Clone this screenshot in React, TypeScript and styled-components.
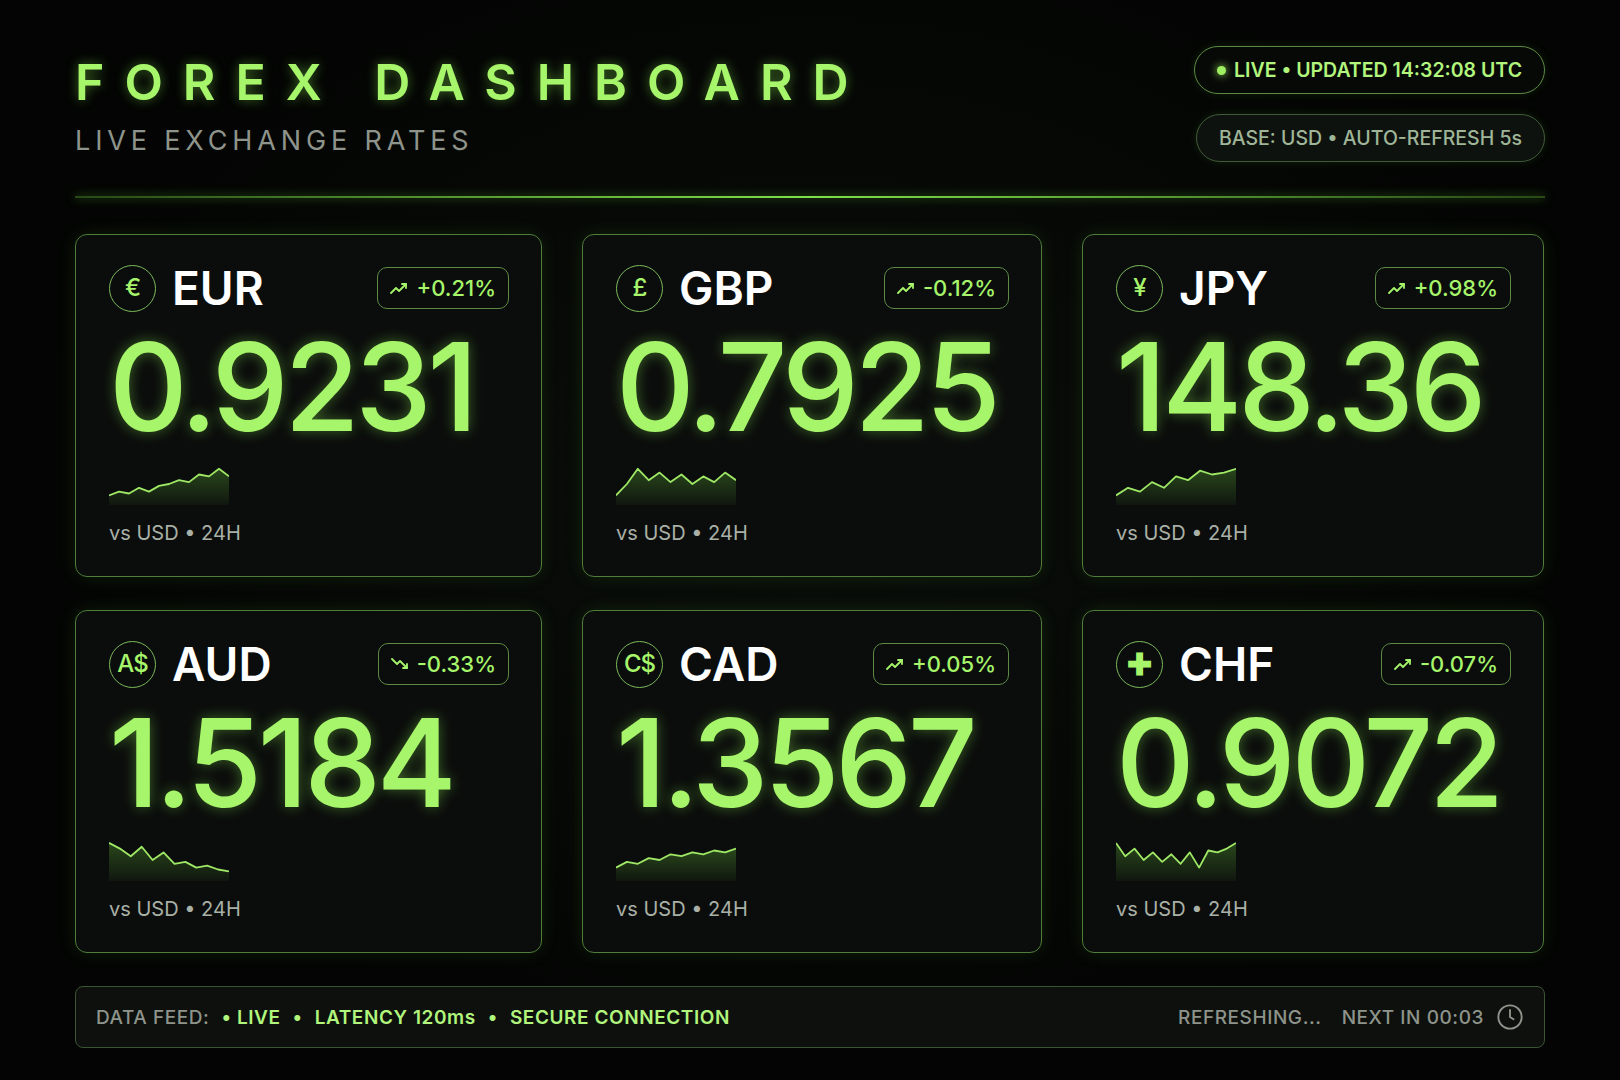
import React from 'react';
import styled, { createGlobalStyle } from 'styled-components';

const GlobalStyle = createGlobalStyle`
  html, body { margin: 0; padding: 0; background: #030403; }
  body { font-family: Inter, "Noto Sans", sans-serif; color: #a6f56a; }
`;

const Page = styled.div`
  width: 1620px;
  height: 1080px;
  box-sizing: border-box;
  padding: 46px 75px 0;
  background: radial-gradient(ellipse at 50% 45%, #0a0e0a 0%, #030403 70%);
  display: flex;
  flex-direction: column;
`;

const Header = styled.header`
  display: flex;
  justify-content: space-between;
  align-items: flex-start;
  height: 150px;
`;

const Title = styled.h1`
  margin: 6px 0 0;
  font-size: 50px;
  line-height: 60px;
  font-weight: 600;
  letter-spacing: 0.4em;
  color: #a6f56a;
  text-shadow: 0 0 12px rgba(140, 240, 80, 0.45);
`;

const Subtitle = styled.div`
  margin-top: 12px;
  font-size: 27px;
  letter-spacing: 0.18em;
  color: #8e948b;
`;

const Pills = styled.div`
  display: flex;
  flex-direction: column;
  align-items: flex-end;
  gap: 20px;
`;

const Pill = styled.div<{ $muted?: boolean }>`
  height: 48px;
  box-sizing: border-box;
  padding: 0 22px;
  border-radius: 24px;
  display: flex;
  align-items: center;
  gap: 8px;
  font-size: 19.5px;
  font-weight: ${(p) => (p.$muted ? 500 : 600)};
  color: ${(p) => (p.$muted ? '#9fb598' : '#b2f57c')};
  border: 1.5px solid ${(p) => (p.$muted ? '#3f5b38' : '#5c8a44')};
  background: ${(p) => (p.$muted ? '#0e120e' : '#070907')};
  box-shadow: 0 0 10px rgba(120, 220, 70, 0.12);
`;

const Dot = styled.span`
  width: 9px;
  height: 9px;
  border-radius: 50%;
  background: #9ef060;
  box-shadow: 0 0 8px #9ef060;
`;

const Divider = styled.div`
  height: 2px;
  background: linear-gradient(90deg, rgba(110, 200, 60, 0.35), #7ee04a 50%, rgba(110, 200, 60, 0.35));
  box-shadow: 0 0 10px rgba(120, 230, 60, 0.6);
`;

const Grid = styled.div`
  margin-top: 36px;
  display: grid;
  grid-template-columns: 467px 460px 462px;
  column-gap: 40px;
  row-gap: 33px;
`;

const Card = styled.div`
  height: 343px;
  box-sizing: border-box;
  padding: 28px 32px 0 33px;
  border: 1.5px solid #4f7d3a;
  border-radius: 12px;
  background: #0b0d0c;
  box-shadow: 0 0 18px rgba(110, 220, 60, 0.12);
  display: flex;
  flex-direction: column;
`;

const CardTop = styled.div`
  display: flex;
  align-items: center;
  justify-content: space-between;
  height: 50px;
`;

const Currency = styled.div`
  display: flex;
  align-items: center;
  gap: 16px;
  font-size: 46px;
  line-height: 50px;
  font-weight: 600;
  color: #fff;
`;

const Symbol = styled.div`
  width: 45px;
  height: 45px;
  border-radius: 50%;
  border: 1.5px solid #7ab85a;
  display: flex;
  align-items: center;
  justify-content: center;
  font-size: 24px;
  font-weight: 500;
  color: #a6f56a;
  letter-spacing: -0.04em;
`;

const Change = styled.div`
  height: 42px;
  box-sizing: border-box;
  padding: 0 12px;
  border-radius: 10px;
  border: 1.5px solid #5c8a44;
  display: flex;
  align-items: center;
  gap: 6px;
  font-size: 22px;
  font-weight: 500;
  color: #a6f56a;
`;

const Rate = styled.div`
  margin-top: 16px;
  font-size: 122px;
  line-height: 116px;
  font-weight: 500;
  letter-spacing: -0.035em;
  color: #a6f56a;
  text-shadow: 0 0 14px rgba(140, 240, 80, 0.4);
`;

const Spark = styled.svg`
  margin-top: 16px;
  display: block;
`;

const Caption = styled.div`
  margin-top: 16px;
  font-size: 20px;
  color: #a9b0a6;
`;

const Footer = styled.footer`
  margin-top: 33px;
  height: 62px;
  box-sizing: border-box;
  padding: 0 20px;
  border: 1.5px solid #3b5432;
  border-radius: 8px;
  background: #0d100d;
  display: flex;
  align-items: center;
  justify-content: space-between;
  font-size: 19px;
  letter-spacing: 0.03em;
`;

const FootGroup = styled.div`
  display: flex;
  align-items: center;
  gap: 12px;
`;

const FootText = styled.span<{ $bright?: boolean }>`
  color: ${(p) => (p.$bright ? '#b2f57c' : '#8e948b')};
  font-weight: ${(p) => (p.$bright ? 600 : 500)};
`;

const TrendUp = () => (
  <svg width="20" height="14" viewBox="0 0 20 14" fill="none" stroke="#a6f56a" strokeWidth="1.8" strokeLinecap="round" strokeLinejoin="round">
    <path d="M1 12l5-5 3 3 7-7" />
    <path d="M12 3h4v4" />
  </svg>
);

const TrendDown = () => (
  <svg width="20" height="14" viewBox="0 0 20 14" fill="none" stroke="#a6f56a" strokeWidth="1.8" strokeLinecap="round" strokeLinejoin="round">
    <path d="M1 2l5 5 3-3 7 7" />
    <path d="M12 11h4v-4" />
  </svg>
);

const Clock = () => (
  <svg width="28" height="28" viewBox="0 0 24 24" fill="none" stroke="#8e948b" strokeWidth="1.6" strokeLinecap="round">
    <circle cx="12" cy="12" r="10" />
    <path d="M12 6v6l3 2" />
  </svg>
);

function Sparkline({ points, id }: { points: number[]; id: string }) {
  const w = 120;
  const h = 44;
  const step = w / (points.length - 1);
  const line = points.map((v, i) => `${(i * step).toFixed(1)},${(h - v * (h - 6) - 2).toFixed(1)}`).join(' ');
  return (
    <Spark width={w} height={h} viewBox={`0 0 ${w} ${h}`}>
      <defs>
        <linearGradient id={id} x1="0" y1="0" x2="0" y2="1">
          <stop offset="0" stopColor="#6fcf3f" stopOpacity="0.3" />
          <stop offset="1" stopColor="#6fcf3f" stopOpacity="0.05" />
        </linearGradient>
      </defs>
      <polygon points={`0,${h} ${line} ${w},${h}`} fill={`url(#${id})`} />
      <polyline points={line} fill="none" stroke="#9ee865" strokeWidth="1.8" strokeLinejoin="round" />
    </Spark>
  );
}

type Pair = { code: string; sym: React.ReactNode; change: string; up: boolean; rate: string; spark: number[] };

const pairs: Pair[] = [
  { code: 'EUR', sym: '€', change: '+0.21%', up: true, rate: '0.9231', spark: [0.2, 0.3, 0.25, 0.4, 0.3, 0.45, 0.5, 0.6, 0.55, 0.75, 0.7, 0.9, 0.7] },
  { code: 'GBP', sym: '£', change: '-0.12%', up: true, rate: '0.7925', spark: [0.2, 0.5, 0.9, 0.6, 0.8, 0.55, 0.75, 0.5, 0.7, 0.55, 0.8, 0.6] },
  { code: 'JPY', sym: '¥', change: '+0.98%', up: true, rate: '148.36', spark: [0.2, 0.4, 0.3, 0.55, 0.4, 0.7, 0.6, 0.85, 0.75, 0.8, 0.9] },
  { code: 'AUD', sym: 'A$', change: '-0.33%', up: false, rate: '1.5184', spark: [0.95, 0.8, 0.6, 0.85, 0.5, 0.7, 0.4, 0.45, 0.3, 0.35, 0.25, 0.2] },
  { code: 'CAD', sym: 'C$', change: '+0.05%', up: true, rate: '1.3567', spark: [0.3, 0.45, 0.4, 0.55, 0.5, 0.65, 0.6, 0.7, 0.65, 0.75, 0.7, 0.8] },
  { code: 'CHF', sym: <b style={{ fontSize: 30, lineHeight: 1 }}>✚</b>, change: '-0.07%', up: true, rate: '0.9072', spark: [0.95, 0.6, 0.8, 0.5, 0.7, 0.45, 0.65, 0.4, 0.7, 0.3, 0.75, 0.7, 0.8, 0.95] },
];

export default function App() {
  return (
    <>
      <GlobalStyle />
      <Page>
        <Header>
          <div>
            <Title>FOREX DASHBOARD</Title>
            <Subtitle>LIVE EXCHANGE RATES</Subtitle>
          </div>
          <Pills>
            <Pill>
              <Dot />
              LIVE • UPDATED 14:32:08 UTC
            </Pill>
            <Pill $muted>BASE: USD • AUTO-REFRESH 5s</Pill>
          </Pills>
        </Header>
        <Divider />
        <Grid>
          {pairs.map((p) => (
            <Card key={p.code}>
              <CardTop>
                <Currency>
                  <Symbol>{p.sym}</Symbol>
                  {p.code}
                </Currency>
                <Change>
                  {p.up ? <TrendUp /> : <TrendDown />}
                  {p.change}
                </Change>
              </CardTop>
              <Rate>{p.rate}</Rate>
              <Sparkline points={p.spark} id={`g-${p.code}`} />
              <Caption>vs USD • 24H</Caption>
            </Card>
          ))}
        </Grid>
        <Footer>
          <FootGroup>
            <FootText>DATA FEED:</FootText>
            <FootText $bright>• LIVE</FootText>
            <FootText $bright>•</FootText>
            <FootText $bright>LATENCY 120ms</FootText>
            <FootText $bright>•</FootText>
            <FootText $bright>SECURE CONNECTION</FootText>
          </FootGroup>
          <FootGroup>
            <FootText>REFRESHING...</FootText>
            <FootText style={{ marginLeft: 8 }}>NEXT IN 00:03</FootText>
            <Clock />
          </FootGroup>
        </Footer>
      </Page>
    </>
  );
}
